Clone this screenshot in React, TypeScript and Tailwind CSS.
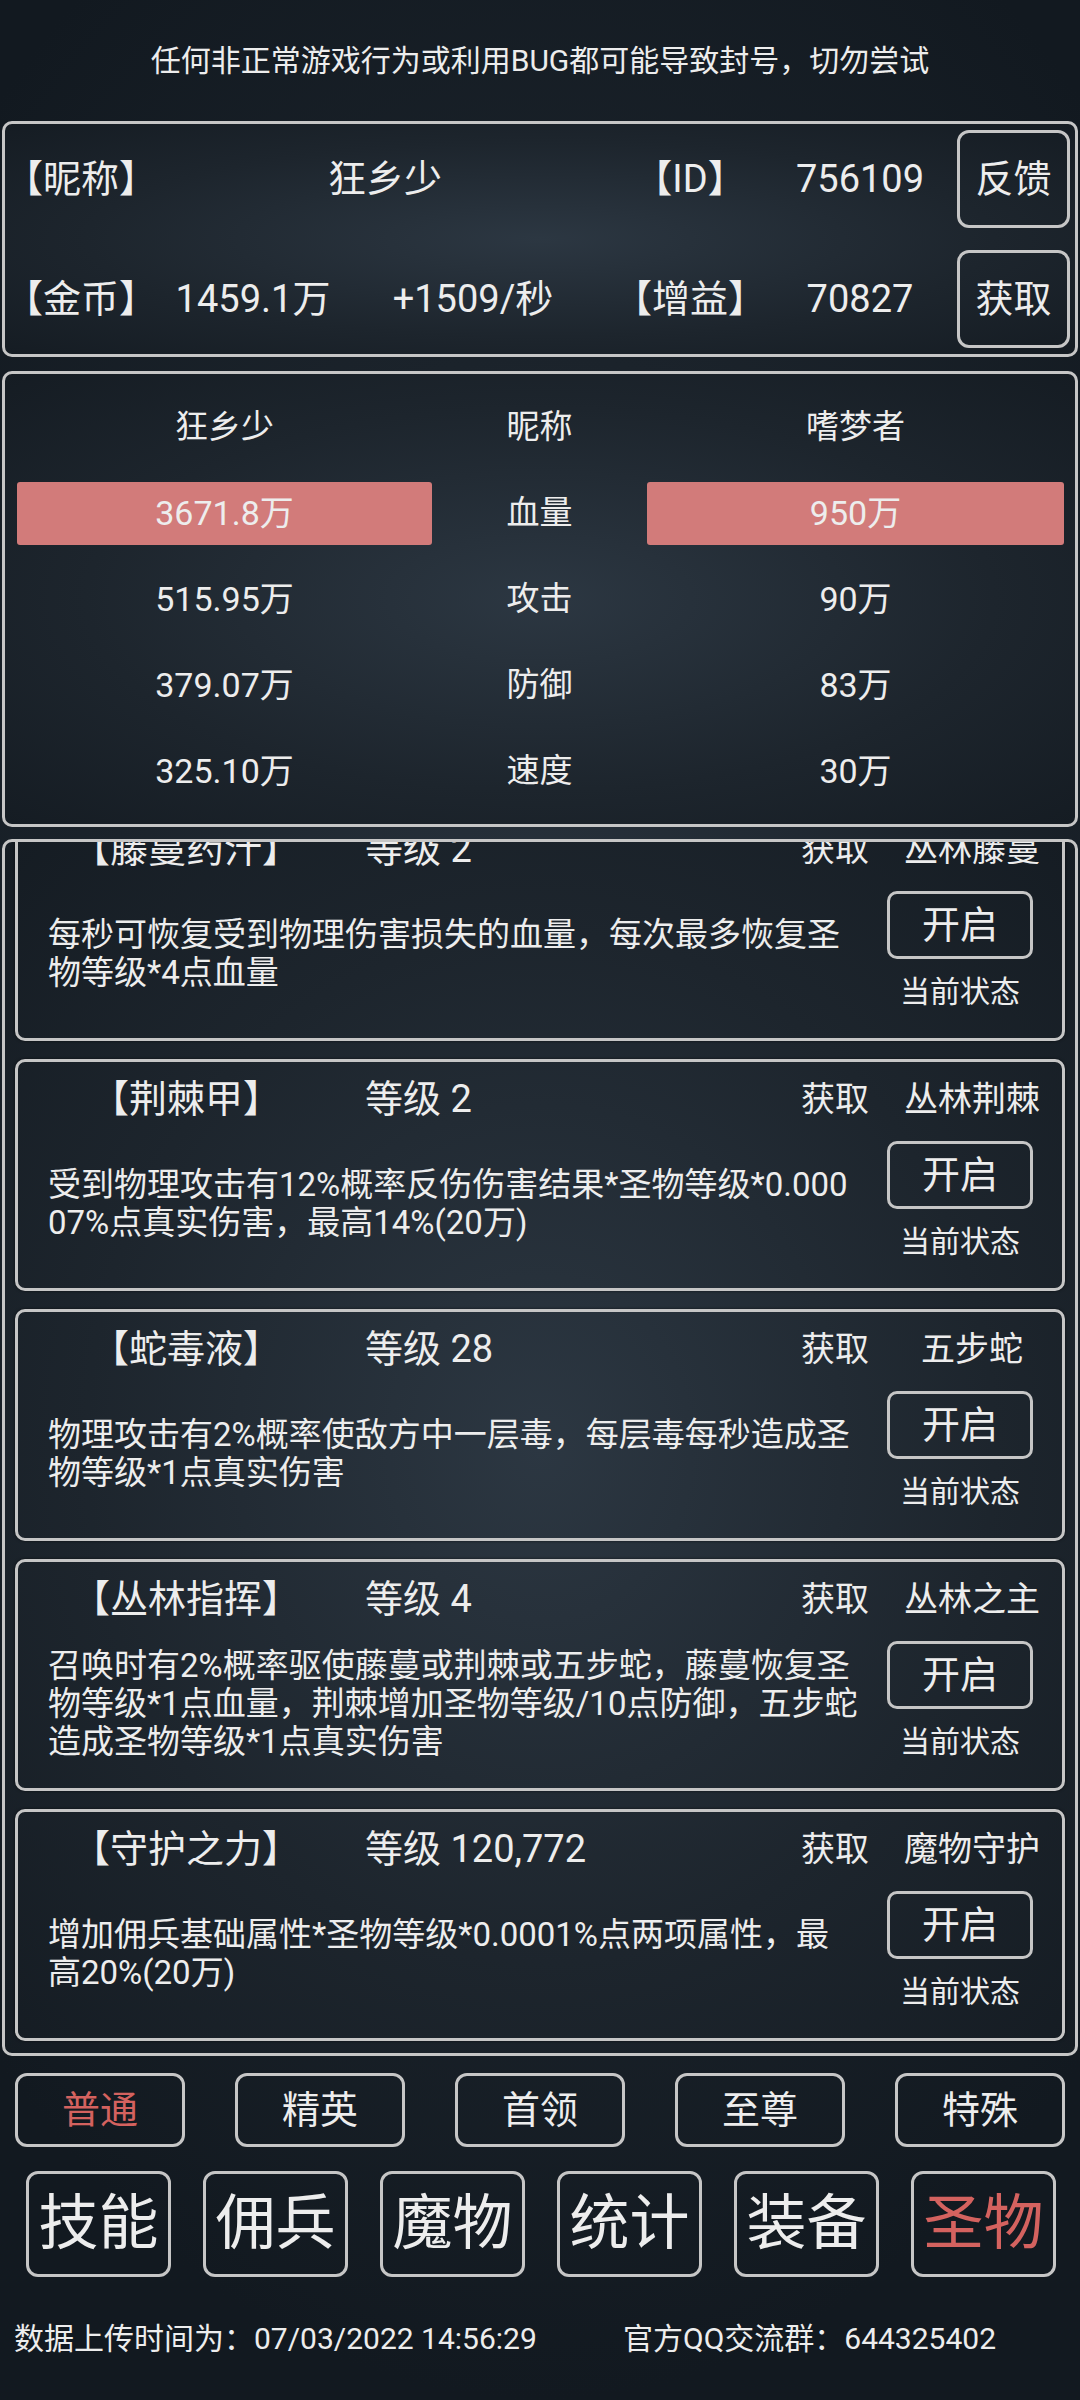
import React from "react";

const panelBg =
  "bg-[radial-gradient(ellipse_at_center,#2c3742_0%,#1d252d_60%,#151c23_100%)]";

type Card = {
  name: string;
  level: string;
  source: string;
  lines: string[];
};

const cards: Card[] = [
  {
    name: "【藤蔓药汁】",
    level: "等级 2",
    source: "丛林藤蔓",
    lines: ["每秒可恢复受到物理伤害损失的血量，每次最多恢复圣", "物等级*4点血量"],
  },
  {
    name: "【荆棘甲】",
    level: "等级 2",
    source: "丛林荆棘",
    lines: ["受到物理攻击有12%概率反伤伤害结果*圣物等级*0.000", "07%点真实伤害，最高14%(20万)"],
  },
  {
    name: "【蛇毒液】",
    level: "等级 28",
    source: "五步蛇",
    lines: ["物理攻击有2%概率使敌方中一层毒，每层毒每秒造成圣", "物等级*1点真实伤害"],
  },
  {
    name: "【丛林指挥】",
    level: "等级 4",
    source: "丛林之主",
    lines: [
      "召唤时有2%概率驱使藤蔓或荆棘或五步蛇，藤蔓恢复圣",
      "物等级*1点血量，荆棘增加圣物等级/10点防御，五步蛇",
      "造成圣物等级*1点真实伤害",
    ],
  },
  {
    name: "【守护之力】",
    level: "等级 120,772",
    source: "魔物守护",
    lines: ["增加佣兵基础属性*圣物等级*0.0001%点两项属性，最", "高20%(20万)"],
  },
];

const stats = [
  { l: "3671.8万", m: "血量", r: "950万", bar: true },
  { l: "515.95万", m: "攻击", r: "90万", bar: false },
  { l: "379.07万", m: "防御", r: "83万", bar: false },
  { l: "325.10万", m: "速度", r: "30万", bar: false },
];

const tabs = ["普通", "精英", "首领", "至尊", "特殊"];
const bigs = ["技能", "佣兵", "魔物", "统计", "装备", "圣物"];

function RelicCard({ c }: { c: Card }) {
  return (
    <div className="h-[232px] shrink-0 border-[3px] border-[#c6c6c6] rounded-[10px] flex flex-col shadow-[0_0_3px_rgba(0,0,0,0.6)]">
      <div className="h-[74px] shrink-0 flex items-center leading-[44px] whitespace-nowrap">
        <div className="w-[336px] text-center text-[38px]">{c.name}</div>
        <div className="ml-[11px] text-[38px]">{c.level}</div>
        <div className="flex-1" />
        <div className="w-[70px] text-center text-[34px]">获取</div>
        <div className="ml-[15px] w-[174px] text-center text-[34px]">{c.source}</div>
        <div className="w-[3px]" />
      </div>
      <div className="flex-1 flex">
        <div className="flex-1 pl-[30px] pb-[16px] flex flex-col justify-center text-[33px] leading-[38px]">
          {c.lines.map((ln, i) => (
            <div key={i} className="whitespace-nowrap">
              {ln}
            </div>
          ))}
        </div>
        <div className="w-[200px] mr-[2px] flex flex-col items-center pt-[5px]">
          <div className="w-[146px] h-[68px] border-[3px] border-[#c6c6c6] rounded-[10px] flex items-center justify-center text-[38px]">
            开启
          </div>
          <div className="mt-[14px] text-[30px] leading-[38px]">当前状态</div>
        </div>
      </div>
    </div>
  );
}

export default function App() {
  return (
    <div className="w-[1080px] h-[2400px] overflow-hidden bg-[radial-gradient(ellipse_75%_55%_at_50%_45%,#2b3540_0%,#1b232b_55%,#121920_100%)] text-[#ededed] font-['Roboto','Noto_Sans_CJK_SC',sans-serif]">
      {/* warning */}
      <div className="h-[121px] flex items-center justify-center text-[30px] leading-[36px] whitespace-nowrap">
        任何非正常游戏行为或利用BUG都可能导致封号，切勿尝试
      </div>

      {/* player info */}
      <div className={`mx-[2px] h-[236px] border-[3px] border-[#c6c6c6] rounded-[10px] ${panelBg} py-[6px] flex flex-col gap-[22px] text-[38px] leading-[44px] whitespace-nowrap`}>
        <div className="h-[98px] flex items-center">
          <div className="w-[150px] text-center">【昵称】</div>
          <div className="w-[460px] text-center">狂乡少</div>
          <div className="w-[150px] text-center">【ID】</div>
          <div className="w-[190px] text-center">756109</div>
          <div className="ml-[2px] w-[113px] h-[98px] border-[3px] border-[#c6c6c6] rounded-[12px] flex items-center justify-center">
            反馈
          </div>
        </div>
        <div className="h-[98px] flex items-center">
          <div className="w-[150px] text-center">【金币】</div>
          <div className="w-[196px] text-center">1459.1万</div>
          <div className="w-[244px] text-center">+1509/秒</div>
          <div className="w-[190px] text-center">【增益】</div>
          <div className="w-[150px] text-center">70827</div>
          <div className="ml-[22px] w-[113px] h-[98px] border-[3px] border-[#c6c6c6] rounded-[12px] flex items-center justify-center">
            获取
          </div>
        </div>
      </div>

      {/* battle stats */}
      <div className={`mx-[2px] mt-[14px] h-[456px] border-[3px] border-[#c6c6c6] rounded-[10px] ${panelBg} py-[10px] pl-[12px]`}>
        <div className="grid grid-cols-[415px_215px_417px] grid-rows-[repeat(5,86px)] items-center text-center whitespace-nowrap">
          <div className="text-[33px]">狂乡少</div>
          <div className="text-[33px]">昵称</div>
          <div className="text-[33px]">嗜梦者</div>
          {stats.map((s) => (
            <React.Fragment key={s.m}>
              {s.bar ? (
                <div className="h-[63px] rounded-[3px] bg-[#d27b7a] flex items-center justify-center text-[34px]">
                  {s.l}
                </div>
              ) : (
                <div className="text-[34px]">{s.l}</div>
              )}
              <div className="text-[33px]">{s.m}</div>
              {s.bar ? (
                <div className="h-[63px] rounded-[3px] bg-[#d27b7a] flex items-center justify-center text-[34px]">
                  {s.r}
                </div>
              ) : (
                <div className="text-[34px]">{s.r}</div>
              )}
            </React.Fragment>
          ))}
        </div>
      </div>

      {/* relic list */}
      <div className={`mx-[2px] mt-[12px] h-[1217px] border-[3px] border-[#c6c6c6] rounded-[10px] ${panelBg} overflow-hidden`}>
        <div className="-mt-[33px] px-[10px] flex flex-col gap-[18px]">
          {cards.map((c) => (
            <RelicCard key={c.name} c={c} />
          ))}
        </div>
      </div>

      {/* tabs */}
      <div className="mt-[17px] px-[15px] flex gap-[50px]">
        {tabs.map((t, i) => (
          <div
            key={t}
            className={`w-[170px] h-[74px] border-[3px] border-[#c6c6c6] rounded-[12px] flex items-center justify-center text-[38px] ${
              i === 0 ? "text-[#d4625f]" : "text-[#ededed]"
            }`}
          >
            {t}
          </div>
        ))}
      </div>

      {/* big nav */}
      <div className="mt-[24px] pl-[26px] flex gap-[32px]">
        {bigs.map((t, i) => (
          <div
            key={t}
            className={`w-[145px] h-[106px] border-[3px] border-[#c6c6c6] rounded-[12px] flex items-center justify-center text-[60px] leading-[70px] whitespace-nowrap ${
              i === 5 ? "text-[#d4625f]" : "text-[#ededed]"
            }`}
          >
            {t}
          </div>
        ))}
      </div>

      {/* footer */}
      <div className="mt-[42px] flex text-[30px] leading-[40px] whitespace-nowrap">
        <div className="w-[623px] pl-[14px]">数据上传时间为：07/03/2022 14:56:29</div>
        <div>官方QQ交流群：644325402</div>
      </div>
    </div>
  );
}
